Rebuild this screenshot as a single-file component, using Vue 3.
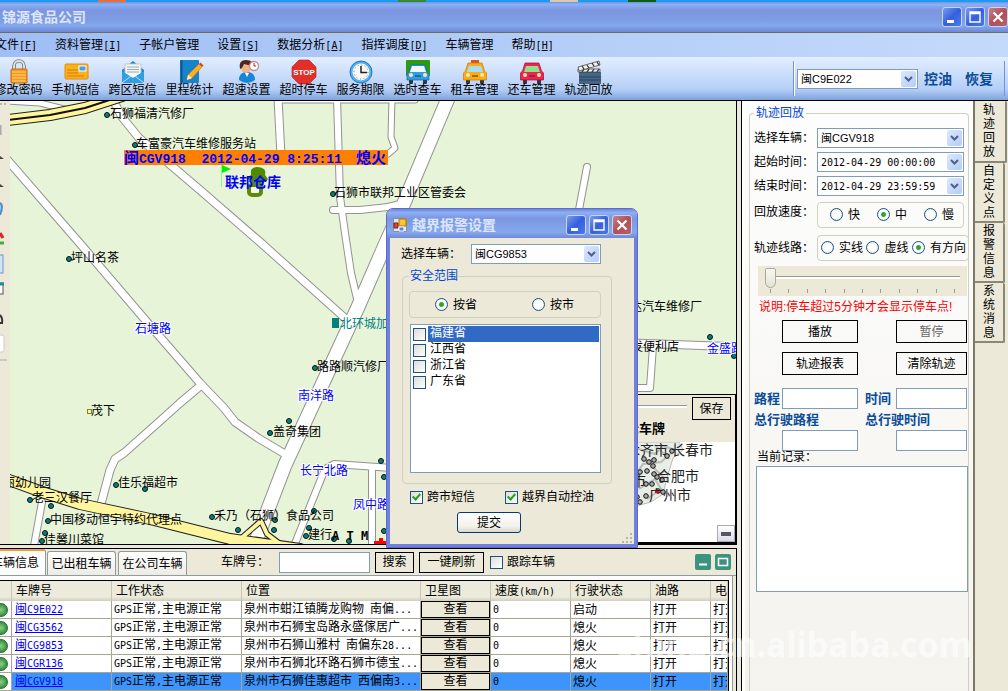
<script setup>
import { h, ref } from 'vue'

const Mix = (props) =>
  props.t
    .split(/([\x20-\x7e]+)/)
    .filter(Boolean)
    .map((p) => (/^[\x20-\x7e]/.test(p) ? h('span', { class: 'half' }, p) : p))
Mix.props = ['t']

const menus = [
  ['文件', 'F'], ['资料管理', 'I'], ['子帐户管理', ''], ['设置', 'S'],
  ['数据分析', 'A'], ['指挥调度', 'D'], ['车辆管理', ''], ['帮助', 'H'],
]
const tools = [
  ['lock', '修改密码'], ['card', '手机短信'], ['mail', '跨区短信'], ['book', '里程统计'],
  ['user', '超速设置'], ['stop', '超时停车'], ['clock', '服务期限'], ['truck', '选时查车'],
  ['taxi', '租车管理'], ['car', '还车管理'], ['film', '轨迹回放'],
]
const sideTabs = ['轨迹回放', '自定义点', '报警信息', '系统消息']
const headers = ['', '车牌号', '工作状态', '位置', '卫星图', '速度(km/h)', '行驶状态', '油路', '电']
const rows = [
  ['闽C9E022', '泉州市蚶江镇腾龙购物 南偏...', '启动'],
  ['闽CG3562', '泉州市石狮宝岛路永盛傢居广...', '熄火'],
  ['闽CG9853', '泉州市石狮山雅村 南偏东28...', '熄火'],
  ['闽CGR136', '泉州市石狮北环路石狮市德宝...', '熄火'],
  ['闽CGV918', '泉州市石狮佳惠超市 西偏南3...', '熄火'],
]
const provinces = ['福建省', '江西省', '浙江省', '广东省']

const roads = [
  [9, 'M112 98 L122 117 L139 138 L200 190 L260 242 L346 319'],
  [9, 'M4 156 L50 209 L83 247 L147 322 L200 383 L224 408 L235 422 L258 438 L290 457'],
  [9, 'M199 387 L180 403 L160 421 L124 453 L115 459 L110 470 L101 504'],
  [15, 'M449 96 L404 203 L385 245 L358 307 L285 465 L254 546'],
  [9, 'M278 98 L281 156'],
  [8, 'M337 98 L340 197 L345 233 L351 273 L358 303'],
  [8, 'M333 210 L360 210 L388 207 L404 203'],
  [7, 'M392 98 L391 137 L395 148 L388 154'],
  [7, 'M281 100 L415 100'],
  [7, 'M8 101 L40 103 L68 110'],
  [8, 'M587 167 L578 215'],
  [8, 'M294 546 L325 469 L334 464 L392 468'],
  [8, 'M372 468 L372 546'],
  [8, 'M42 502 L34 546'],
  [9, 'M630 343 L660 344 L740 347'],
  [8, 'M653 346 L650 388 L630 388'],
]
const yellow = [
  [12, 'M8 120 L50 115 L85 108 L122 96'],
  [12, 'M6 479 L45 493 L80 504 L150 519 L230 539 L300 549'],
  [6, 'M238 541 L261 521 L267 534 L280 544'],
]
const dots = [
  [107, 115], [135, 145], [333, 194], [69, 259], [315, 368], [289, 421], [270, 433], [116, 485],
  [145, 489], [30, 500], [51, 506], [48, 521], [45, 533], [42, 541], [212, 517], [238, 530],
  [274, 530], [275, 520], [314, 511], [309, 528], [306, 536], [334, 539], [349, 541],
  [381, 461], [384, 477], [384, 531], [710, 337], [734, 356],
]
const places = [
  ['石狮福清汽修厂', 110, 118], ['车富豪汽车维修服务站', 136, 148], ['石狮市联邦工业区管委会', 334, 197],
  ['坪山名茶', 71, 262], ['路路顺汽修厂', 317, 371], ['盖奇集团', 273, 436], ['茂下', 91, 415],
  ['丽幼儿园', 3, 487], ['老三汉餐厅', 32, 502], ['佳乐福超市', 118, 487],
  ['中国移动恒宇特约代理点', 50, 524], ['佳馨川菜馆', 44, 544], ['禾乃（石狮）食品公司', 214, 520],
  ['建行', 308, 539], ['运达汽车维修厂', 618, 311], ['百发便利店', 619, 351],
]
const streets = [
  ['石塘路', 135, 333], ['南洋路', 298, 400], ['长宁北路', 300, 475], ['凤中路', 353, 509], ['金盛路', 707, 353],
]
const blobs = [
  [645, 458], [650, 461], [655, 459], [654, 465], [641, 471], [648, 470], [658, 476], [647, 483],
  [653, 483], [663, 479], [659, 490], [647, 495], [641, 501], [668, 455], [673, 450], [664, 491], [638, 496], [655, 473],
]

const vehicle = ref('闽CG9853')
const scope = ref('prov')
const speed = ref('mid')
const line = ref('dir')
const sms = ref(true)
const autoOil = ref(true)
const plate = ref('')
</script>

<template>
  <div class="app">
    <div class="desktop"><i class="d1"></i><i class="d2"></i><i class="d3"></i><i class="d4"></i></div>

    <header class="titlebar">
      <h1>锦源食品公司</h1>
      <div class="winbtns">
        <button class="wb" aria-label="最小化"><svg viewBox="0 0 18 18"><path d="M4 12h7v3H4z" fill="#fff" /></svg></button>
        <button class="wb" aria-label="最大化"><svg viewBox="0 0 18 18"><path d="M4 4h10v10H4zM4 5.5h10" fill="none" stroke="#fff" stroke-width="1.4" /></svg></button>
        <button class="wb close" aria-label="关闭"><svg viewBox="0 0 18 18"><path d="M4.500 4.500l9 9M13.500 4.500l-9 9" stroke="#fff" stroke-width="2.200" /></svg></button>
      </div>
    </header>

    <nav class="menubar">
      <button v-for="m in menus" :key="m[0]">{{ m[0] }}<span v-if="m[1]" class="half">[<u>{{ m[1] }}</u>]</span></button>
    </nav>

    <div class="toolbar">
      <button v-for="t in tools" :key="t[1]" class="tool">
        <svg viewBox="0 0 24 24">
          <g v-if="t[0] === 'lock'">
            <path d="M7 10V6a5 5 0 0 1 10 0v5" fill="none" stroke="#777" stroke-width="3.600" />
            <path d="M7 10V6a5 5 0 0 1 10 0v5" fill="none" stroke="#e4e6e8" stroke-width="1.800" />
            <rect x="4" y="9" width="16" height="14" rx="1" fill="#f79a1c" stroke="#c86a08" />
            <path d="M5 12h14M5 15h14M5 18h14M5 21h14" stroke="#ffd27a" />
          </g>
          <g v-else-if="t[0] === 'card'">
            <rect x="1" y="4" width="23" height="15" rx="1" fill="#f9b21c" stroke="#e88a08" />
            <path d="M3 10h11M3 13h11M3 16h17" stroke="#d87608" />
            <rect x="15" y="6" width="7" height="5" fill="#3fa2ec" stroke="#fff" />
          </g>
          <g v-else-if="t[0] === 'mail'">
            <path d="M1 10L12 1l11 9v13H1z" fill="#1f83c8" />
            <path d="M4 4h16v14H4z" fill="#f7f7f2" stroke="#bcc8d4" />
            <path d="M6 7h12M6 9.500h12M6 12h12" stroke="#9aa7b4" />
            <path d="M1 11l11 7 11-7v12H1z" fill="#2f9fe4" /><path d="M1 23l9-7M23 23l-9-7" stroke="#b6e2fb" />
          </g>
          <g v-else-if="t[0] === 'book'">
            <rect x="2" y="0" width="19" height="23" rx="1" fill="#1683cc" /><path d="M3.500 0v23" stroke="#0a5690" stroke-width="2" />
            <path d="M9 20l1-5L21 4l3 3-10 11z" fill="#fbb21c" stroke="#e07808" stroke-width=".7" />
            <path d="M21 4l1.500-1.500 3 3L24 7z" fill="#e04028" /><path d="M9 20l1-5 4 3z" fill="#fff2d0" />
          </g>
          <g v-else-if="t[0] === 'user'">
            <path d="M4 20q0-8 8-8t8 8q-8 6-16 0" fill="#1686d6" /><path d="M10 13l2 4 2-4z" fill="#fff" />
            <circle cx="11" cy="8" r="5" fill="#f2b588" /><path d="M5 9Q3 0 11 0t6 6L9 4 7 8z" fill="#4a2a20" />
            <circle cx="19" cy="6" r="4.500" fill="#fff" stroke="#c88" stroke-width="1.300" /><path d="M19 3v3h2" fill="none" stroke="#933" />
          </g>
          <g v-else-if="t[0] === 'stop'">
            <path d="M7 0h10l7 7v10l-7 7H7l-7-7V7z" fill="#e22f2a" stroke="#b81c1c" stroke-width=".6" />
            <text x="12" y="15" text-anchor="middle" class="stoptext">STOP</text>
          </g>
          <g v-else-if="t[0] === 'clock'">
            <circle cx="12" cy="12" r="11" fill="#52aef0" stroke="#2278bc" /><circle cx="12" cy="12" r="8.500" fill="#f8f8f8" />
            <circle cx="12" cy="12" r="7" fill="none" stroke="#777" stroke-dasharray="1 2.660" /><path d="M12 6v6.500h6" fill="none" stroke="#222" stroke-width="1.500" />
          </g>
          <g v-else-if="t[0] === 'film'">
            <rect x="2" y="12" width="22" height="12" fill="#426684" /><path d="M2 17h22M2 20h22" stroke="#27455f" />
            <path d="M1 12h22v-3H1z" fill="#eee" stroke="#333" stroke-width=".7" /><path d="M1 7l21-6 1 4L2 11z" fill="#eee" stroke="#333" stroke-width=".7" />
            <path d="M5 6l2 3M10 5l2 3M15 3l2 3M20 2l2 3M5 12l2-3M10 12l2-3M15 12l2-3M20 12l2-3" stroke="#333" stroke-width="1.300" />
          </g>
          <g v-else>
            <rect v-if="t[0] === 'truck'" x="0" y="0" width="24" height="16" rx="1" fill="#2f9a10" />
            <rect v-if="t[0] === 'taxi'" x="8" y="0" width="8" height="3" fill="#d8571c" />
            <rect x="3" y="18" width="4" height="6" rx="1" fill="#334" /><rect x="17" y="18" width="4" height="6" rx="1" fill="#334" />
            <path
              :d="t[0] === 'truck' ? 'M5 5h14l2 7 2 2v6H1v-6l2-2z' : 'M5 3h14l2.5 8 2 2v7H.5v-7l2-2z'"
              :fill="t[0] === 'truck' ? '#2e9ee6' : t[0] === 'taxi' ? '#fbab14' : '#ee2450'"
              :stroke="t[0] === 'truck' ? '#1668a8' : t[0] === 'taxi' ? '#c87808' : '#a80c30'" stroke-width=".7"
            />
            <path d="M6 6h12l2 6H4z" :fill="t[0] === 'truck' ? '#f0f8ff' : t[0] === 'taxi' ? '#a8dcf4' : '#8ee08a'" />
            <circle cx="5" cy="15" r="2" fill="#ffe9a0" /><circle cx="19" cy="15" r="2" fill="#ffe9a0" /><path d="M9 16h6" stroke="#333" />
          </g>
        </svg>
        <span>{{ t[1] }}</span>
      </button>
      <div class="toolend">
        <span class="combo topcombo">
          <select aria-label="车辆"><option>闽C9E022</option></select>
          <svg viewBox="0 0 15 16"><path d="M4 6l3.500 3.500L11 6" /></svg>
        </span>
        <button class="oil">控油</button>
        <button class="oil">恢复</button>
      </div>
    </div>

    <main class="body">
      <section class="left">
        <div class="maprow">
          <div class="strip">
            <svg viewBox="0 0 10 443" preserveAspectRatio="xMinYMin slice">
              <path d="M0 3h6" stroke="#888" stroke-dasharray="2 2" /><path d="M0 24v10" stroke="#aaa" stroke-width="3" />
              <path d="M0 55l4 3H0zM0 83l4 3H0z" fill="#444" /><path d="M0 102q4 2 0 12" fill="#9bd0f4" stroke="#4a90c8" stroke-width="2" />
              <path d="M0 132l3 5" stroke="#d22" stroke-width="3" /><path d="M0 142h4" stroke="#4a4" stroke-width="3" />
              <rect x="-4" y="154" width="7" height="18" fill="#cfe4f8" stroke="#6a9ac8" /><rect x="-4" y="182" width="7" height="11" fill="#fff" stroke="#555" /><path d="M-4 183h8" stroke="#28a" stroke-width="3" />
              <path d="M0 214q3 3 2 8H0" fill="none" stroke="#333" stroke-width="2" /><rect x="-4" y="234" width="8" height="17" rx="2" fill="#fff" stroke="#ccc" /><path d="M0 259h7" stroke="#aaa" />
            </svg>
          </div>
          <div class="map">
            <svg class="canvas" viewBox="10 101 726 443" preserveAspectRatio="xMinYMin slice">
              <g fill="none" stroke-linecap="round" stroke-linejoin="round">
                <path v-for="(r, i) in roads" :key="'a' + i" :d="r[1]" :stroke-width="r[0]" stroke="#939393" />
                <path v-for="(r, i) in roads" :key="'b' + i" :d="r[1]" :stroke-width="r[0] - 2" stroke="#fff" />
                <path v-for="(r, i) in yellow" :key="'c' + i" :d="r[1]" :stroke-width="r[0]" stroke="#222" />
                <path v-for="(r, i) in yellow" :key="'d' + i" :d="r[1]" :stroke-width="r[0] - 2" stroke="#fff59c" />
                <path :d="yellow[0][1]" stroke="#111" stroke-width="2" />
              </g>
              <circle v-for="(d, i) in dots" :key="'e' + i" :cx="d[0]" :cy="d[1]" r="2.500" fill="#008080" stroke="#111" />
              <rect x="87.500" y="409.500" width="4" height="4" fill="none" stroke="#880" />
              <text v-for="p in places" :key="p[0]" :x="p[1]" :y="p[2]" class="place">{{ p[0] }}</text>
              <text x="332" y="540" class="atm">A T M</text>
              <rect x="332" y="318" width="7" height="10" fill="#008080" /><text x="340" y="328" class="place teal">北环城加油站</text>
              <text v-for="p in streets" :key="p[0]" :x="p[1]" :y="p[2]" class="street">{{ p[0] }}</text>
              <path d="M374 541h5v-3h4v3h6v3h-15z" fill="#f00" />
              <rect x="124" y="150" width="264" height="15" fill="#ff8000" />
              <text x="124" y="163" class="tag">闽<tspan class="tagl">CGV918&#160;&#160;2012-04-29 8:25:11 </tspan><tspan x="356">熄火</tspan></text>
              <path d="M221.500 165v22" stroke="#7fff7f" /><path d="M222 165l9 4-9 4z" fill="#0e0" />
              <path d="M251 170q2-3 6-3t7 2q2 2 1 6l3 4-2 3h-3v5h-12v-6l-5-3 5-3z" fill="#4f8a00" />
              <rect x="249" y="185" width="12" height="10" rx="3" fill="#f4faec" stroke="#5b8c08" stroke-width="4" />
              <text x="225" y="187" class="depot">联邦仓库</text>
            </svg>
            <aside class="overview">
              <div class="ovtop">
                <i class="ovslider"></i>
                <button class="flat">保存</button>
                <b>显示车牌</b>
              </div>
              <div class="ovmap">
                <svg viewBox="600 441 136 101" preserveAspectRatio="xMinYMin slice">
                  <path d="M620 441h60l4 8-10 8-6 20-4 16-12 8-22 6-20-10z" fill="#e6eee6" stroke="#c4b8b8" />
                  <path d="M636 447l20 6 8-8 12 4-14 12-18 2-8 12 14 8 16-14M640 488l16-10 6 10-14 10M656 444l14 14M644 456l22 22" fill="none" stroke="#bbb" stroke-width="2" />
                  <circle v-for="(b, i) in blobs" :key="i" :cx="b[0]" :cy="b[1]" r="2.300" fill="#aaa" stroke="#111" />
                  <path d="M656 491h4" stroke="#e00" stroke-width="2" />
                  <text x="627" y="454">木齐市</text><text x="672" y="454">长春市</text><text x="658" y="480">合肥市</text>
                  <text x="633" y="485">市</text><text x="650" y="499">广州市</text>
                </svg>
                <button class="shrink" aria-label="收起"></button>
              </div>
            </aside>
          </div>
        </div>

        <section class="bottom">
          <div class="tabs">
            <button class="tab on">车辆信息</button>
            <button class="tab">已出租车辆</button>
            <button class="tab">在公司车辆</button>
            <label class="platelab" for="plate">车牌号：</label>
            <input id="plate" v-model="plate" class="plate" type="text" />
            <button class="flat s1">搜索</button>
            <button class="flat s2">一键刷新</button>
            <label class="follow"><input type="checkbox" />跟踪车辆</label>
            <div class="greens">
              <button aria-label="最小化"><svg viewBox="0 0 16 16"><path d="M4 10.500h8" stroke="#fff" stroke-width="2" /></svg></button>
              <button aria-label="最大化"><svg viewBox="0 0 16 16"><path d="M3.500 4.500h9v7h-9z" fill="none" stroke="#fff" stroke-width="1.500" /></svg></button>
            </div>
          </div>
          <div class="tablebox">
            <table>
              <colgroup><col class="c0" /><col class="c1" /><col class="c2" /><col /><col class="c4" /><col class="c5" /><col class="c5" /><col class="c7" /><col class="c8" /></colgroup>
              <thead><tr><th v-for="(x, i) in headers" :key="i"><Mix :t="x" /></th></tr></thead>
              <tbody>
                <tr v-for="(r, i) in rows" :key="r[0]" :class="{ sel: i === 4 }">
                  <td class="ball"><i></i></td>
                  <td class="link"><a href="#"><Mix :t="r[0]" /></a></td>
                  <td><Mix t="GPS正常,主电源正常" /></td>
                  <td><Mix :t="r[1]" /></td>
                  <td class="view"><button>查看</button></td>
                  <td><Mix t="0" /></td>
                  <td>{{ r[2] }}</td>
                  <td>打开</td>
                  <td>打开</td>
                </tr>
              </tbody>
            </table>
          </div>
        </section>
      </section>

      <section class="right">
        <form class="panel" @submit.prevent>
          <fieldset>
            <legend>轨迹回放</legend>
            <div class="frow first">
              <label for="rv">选择车辆：</label>
              <span class="combo"><select id="rv"><option>闽CGV918</option></select><svg viewBox="0 0 15 16"><path d="M4 6l3.500 3.500L11 6" /></svg></span>
            </div>
            <div class="frow">
              <label for="t1">起始时间：</label>
              <span class="combo date"><input id="t1" type="text" value="2012-04-29 00:00:00" /><svg viewBox="0 0 15 16"><path d="M4 6l3.500 3.500L11 6" /></svg></span>
            </div>
            <div class="frow">
              <label for="t2">结束时间：</label>
              <span class="combo date"><input id="t2" type="text" value="2012-04-29 23:59:59" /><svg viewBox="0 0 15 16"><path d="M4 6l3.500 3.500L11 6" /></svg></span>
            </div>
            <div class="frow tall">
              <span class="up">回放速度：</span>
              <div class="group spd" role="radiogroup" aria-label="回放速度">
                <label><input v-model="speed" type="radio" value="fast" />快</label>
                <label><input v-model="speed" type="radio" value="mid" />中</label>
                <label><input v-model="speed" type="radio" value="slow" />慢</label>
              </div>
            </div>
            <div class="frow tall wide">
              <span>轨迹线路：</span>
              <div class="group lin" role="radiogroup" aria-label="轨迹线路">
                <label><input v-model="line" type="radio" value="solid" />实线</label>
                <label><input v-model="line" type="radio" value="dash" />虚线</label>
                <label><input v-model="line" type="radio" value="dir" />有方向</label>
              </div>
            </div>
            <div class="slider">
              <input type="range" min="0" max="10" value="0" aria-label="回放进度" />
              <div class="ticks"><i v-for="n in 11" :key="n"></i></div>
            </div>
            <p class="note">说明:停车超过5分钟才会显示停车点!</p>
            <div class="grid btns">
              <button class="flat">播放</button><button class="flat off" disabled>暂停</button>
              <button class="flat">轨迹报表</button><button class="flat">清除轨迹</button>
            </div>
            <div class="grid stats">
              <label for="g1">路程</label><input id="g1" type="text" /><label for="g2" class="sec">时间</label><input id="g2" type="text" />
              <label for="g3" class="span2">总行驶路程</label><label for="g4" class="span2">总行驶时间</label>
              <input id="g3" type="text" class="c-a" /><input id="g4" type="text" class="c-b" />
            </div>
            <label class="reclab" for="rec">当前记录：</label>
            <textarea id="rec"></textarea>
          </fieldset>
        </form>
        <nav class="side">
          <button v-for="(s, i) in sideTabs" :key="s" :class="{ cur: i === 0 }">{{ s }}</button>
        </nav>
      </section>
    </main>

    <div class="mark">china.cn.alibaba.com</div>

    <section class="dialog" role="dialog" aria-label="越界报警设置">
      <header>
        <svg class="formicon" viewBox="0 0 14 14">
          <path d="M.5.500h13v13H.5z" fill="#dfe6f4" stroke="#8a90a0" /><path d="M6 1h7v7H6z" fill="#fbc62c" stroke="#a67a08" />
          <path d="M1 5h4v5H1z" fill="#e04432" stroke="#8c1c10" /><path d="M6 9h5v4H6z" fill="#4c84e8" stroke="#fff" />
        </svg>
        <h2>越界报警设置</h2>
        <div class="winbtns">
          <button class="wb" aria-label="最小化"><svg viewBox="0 0 18 18"><path d="M4 12h7v3H4z" fill="#fff" /></svg></button>
          <button class="wb" aria-label="最大化"><svg viewBox="0 0 18 18"><path d="M4 4h10v10H4zM4 5.500h10" fill="none" stroke="#fff" stroke-width="1.400" /></svg></button>
          <button class="wb close" aria-label="关闭"><svg viewBox="0 0 18 18"><path d="M4.500 4.500l9 9M13.500 4.500l-9 9" stroke="#fff" stroke-width="2.200" /></svg></button>
        </div>
      </header>
      <div class="dbody">
        <div class="drow">
          <label for="dv">选择车辆：</label>
          <span class="combo"><select id="dv" v-model="vehicle"><option>闽CG9853</option></select><svg viewBox="0 0 15 16"><path d="M4 6l3.500 3.500L11 6" /></svg></span>
        </div>
        <fieldset>
          <legend>安全范围</legend>
          <div class="group" role="radiogroup" aria-label="范围类型">
            <label><input v-model="scope" type="radio" value="prov" />按省</label>
            <label><input v-model="scope" type="radio" value="city" />按市</label>
          </div>
          <ul>
            <li v-for="(p, i) in provinces" :key="p"><label><input type="checkbox" /><span :class="{ hot: i === 0 }">{{ p }}</span></label></li>
          </ul>
        </fieldset>
        <div class="checks">
          <label><input v-model="sms" type="checkbox" />跨市短信</label>
          <label><input v-model="autoOil" type="checkbox" />越界自动控油</label>
        </div>
        <button class="submit">提交</button>
      </div>
      <svg class="grip" viewBox="0 0 12 12"><path d="M8 1h2v2H8zM4 5h2v2H4zM8 5h2v2H8zM0 9h2v2H0zM4 9h2v2H4zM8 9h2v2H8z" fill="#b8b4a2" /></svg>
    </section>
  </div>
</template>

<style>
body { margin: 0; overflow: hidden; }
.half { font-family: "DejaVu Sans Mono", monospace; font-size: 10px; white-space: pre; }
</style>

<style scoped>
.app {
  position: relative; height: 100vh; display: flex; flex-direction: column; overflow: hidden;
  background: #ece9d8; color: #000; font: 12px/16px "Liberation Sans", "Noto Sans CJK SC", sans-serif; white-space: nowrap;
}
.app * { box-sizing: border-box; }
button, input, select, textarea { font: inherit; color: inherit; margin: 0; padding: 0; border-radius: 0; }
button { border: 0; background: none; line-height: 16px; }
h1, h2, p, ul { margin: 0; padding: 0; }
fieldset { margin: 0; min-width: 0; }

.desktop { height: 2px; background: #1b9cf0; display: flex; }
.desktop i { height: 2px; width: 28px; }
.d1 { margin-left: 98px; background: #e87038; }
.d2 { margin-left: 272px; background: #3a8a30; }
.d3 { margin-left: 124px; background: #d8c8b0; }
.d4 { margin-left: 50px; background: #0a6010; }

.titlebar {
  height: 31px; display: flex; align-items: center; justify-content: space-between; padding: 0 0 0 2px;
  background: linear-gradient(#7092e4, #8cb0f4 8%, #7c96e0 26%, #7d9ce4 60%, #84a8ee 78%, #7088d4);
  border-bottom: 1px solid #706c58;
}
h1, h2 { font-size: 14px; line-height: 18px; font-weight: 700; color: #dce6fa; }
.winbtns { display: flex; gap: 3px; }
.wb {
  width: 20px; height: 20px; border: 1px solid #c8d4f4; border-radius: 3px;
  background: linear-gradient(135deg, #7c9cf0, #3460dc 50%, #4a7aec);
}
.wb svg { display: block; width: 18px; height: 18px; }
.wb.close { background: linear-gradient(135deg, #c88088, #b05058 50%, #b86068); }

.menubar { height: 24px; display: flex; align-items: center; background: linear-gradient(90deg, #9ebef5, #c4dafa); }
.menubar button { padding: 0 9px; flex: none; }
.menubar button:first-child { margin-left: -14px; }

.toolbar {
  height: 44px; display: flex; align-items: stretch; border-bottom: 1px solid #000;
  background: linear-gradient(#e2eefe, #c8dcfa 45%, #b4cef6 75%, #7ea4dc);
}
.tool { width: 57px; flex: none; display: flex; flex-direction: column; align-items: center; padding-top: 3px; }
.tool:first-child { margin-left: -10px; }
.tool svg { width: 24px; height: 24px; flex: none; overflow: visible; }
.tool span { line-height: 14px; margin-top: -1px; }
.stoptext { font: 700 8px "Liberation Sans", sans-serif; fill: #fff; }
.toolend {
  margin: 4px 3px 4px auto; padding: 0 11px 0 3px; display: flex; align-items: center; gap: 6px;
  border-left: 1px solid #6f94d0; border-right: 1px solid #6f94d0; box-shadow: inset 1px 0 #fff;
}
.oil { font-size: 14px; font-weight: 700; color: #0a4c98; }
.oil + .oil { margin-left: 7px; }

.combo { position: relative; display: block; height: 20px; flex: 1; }
.combo select, .combo input {
  appearance: none; display: block; width: 100%; height: 100%; border: 1px solid #7f9db9; background: #fff; padding: 0 20px 0 3px;
  font-family: "Liberation Sans", "Noto Sans CJK SC", sans-serif; font-size: 11px; line-height: 16px; outline: none;
}
.combo.date input { font: 10px/16px "DejaVu Sans Mono", monospace; }
.combo svg {
  position: absolute; right: 2px; top: 2px; width: 15px; height: calc(100% - 4px); pointer-events: none;
  background: linear-gradient(135deg, #dce8fe, #b4ccf8); border-radius: 2px;
}
.combo path { fill: none; stroke: #4d6185; stroke-width: 2; }
.topcombo { width: 121px; flex: none; }

.body { flex: 1; min-height: 0; display: flex; }
.left { flex: 1; min-width: 0; display: flex; flex-direction: column; }
.maprow { flex: 1; min-height: 0; display: flex; border-right: 1px solid #000; border-bottom: 1px solid #000; }
.strip { width: 10px; background: #ece9d8; flex: none; overflow: hidden; }
.strip svg { display: block; width: 100%; height: 100%; }
.map { position: relative; flex: 1; min-width: 0; background: #e7f4d8; overflow: hidden; }
.canvas { display: block; width: 100%; height: 100%; }
.place { font-size: 12px; fill: #000; }
.teal { fill: #008080; }
.atm { font: 700 12px "DejaVu Sans Mono", monospace; }
.street { font-size: 12px; fill: #00f; stroke: #fff; stroke-width: 2px; paint-order: stroke; }
.tag { font-size: 15px; font-weight: 700; fill: #00f; }
.tagl { font-family: "Liberation Mono", monospace; font-size: 13px; white-space: pre; }
.depot { font-size: 14px; font-weight: 700; fill: #00f; }

.overview { position: absolute; right: 0; bottom: 0; width: 137px; height: 150px; border: 1px solid #000; border-width: 1px 1px 2px 0; background: #ece9d8; display: flex; flex-direction: column; }
.ovtop { height: 47px; display: grid; grid-template-columns: 1fr 39px; column-gap: 5px; padding: 2px 4px 0 0; flex: none; }
.ovslider { height: 3px; margin-top: 8px; border-top: 1px solid #999; background: #fff; }
.ovtop b { margin-left: 14px; margin-top: -4px; font-size: 13px; }
.ovmap { position: relative; flex: 1; background: #fff; min-height: 0; }
.ovmap svg { display: block; width: 100%; height: 100%; }
.ovmap text { font-size: 14px; fill: #222; }
.shrink { position: absolute; right: 0; bottom: 0; width: 18px; height: 17px; border: 1px solid #a8a8c0; background: linear-gradient(#fff, #dcdce8); }
.shrink::after { content: ""; display: block; width: 10px; height: 4px; margin: auto; background: #556; }

.flat { border: 1px solid #000; background: transparent; height: 23px; }
.flat.off { color: #666; }

.bottom { flex: none; margin-top: 3px; border-top: 1px solid #000; border-right: 1px solid #000; }
.tabs { height: 27px; display: flex; align-items: center; padding-right: 5px; border-bottom: 1px solid #919b9c; }
.tab { flex: none; height: 24px; margin-right: 2px; align-self: flex-end; border: 1px solid #919b9c; border-bottom: 0; border-radius: 3px 3px 0 0; background: linear-gradient(#fff, #ecebe4); width: 69px; }
.tab.on { height: 26px; width: 62px; margin-left: -16px; margin-right: 1px; background: #fcfcfb; border-top: 2px solid #f0a030; }
.platelab { margin-left: 32px; width: 58px; }
.plate { width: 91px; height: 21px; border: 1px solid #7f9db9; background: #fff; outline: none; padding: 0 3px; }
.s1 { width: 39px; height: 21px; margin-left: 5px; }
.s2 { width: 65px; height: 21px; margin-left: 5px; }
.follow { display: flex; align-items: center; gap: 4px; margin-left: 6px; }
.greens { display: flex; gap: 4px; margin-left: auto; }
.greens button { width: 16px; height: 16px; background: #3c9480; border-radius: 2px; }
.greens svg { display: block; width: 16px; height: 16px; }
.tablebox { margin: 0 3px 0 0; padding-top: 4px; background: #fcfcfc; border-right: 1px solid #919b9c; padding-right: 3px; overflow: hidden; }
table { table-layout: fixed; width: 100%; border-collapse: separate; border-spacing: 0; background: #fff; border-top: 1px solid #000; border-right: 1px solid #000; }
.c0 { width: 12px; } .c1 { width: 100px; } .c2 { width: 130px; } .c4 { width: 70px; } .c5 { width: 80px; } .c7 { width: 60px; } .c8 { width: 17px; }
th { height: 20px; padding: 0 0 0 4px; text-align: left; font-weight: 400; background: linear-gradient(#ebeadb 80%, #d0cdbc); border-right: 1px solid #c8c4b0; overflow: hidden; }
td { height: 18px; padding: 0 0 0 2px; border-right: 1px solid #a8a590; border-bottom: 1px solid #a8a590; overflow: hidden; line-height: 16px; }
td.link { padding-left: 3px; }
td a { color: #00f; }
td.ball { padding: 0; }
.ball i { display: block; width: 14px; height: 14px; margin-left: -6px; border-radius: 50%; background: radial-gradient(#8ccf84, #3f9a48 60%, #2c6838); border: 1px solid #2c6838; }
td.view { padding: 0; }
.view button { display: block; width: 100%; height: 17px; line-height: 15px; border: 1px solid #000; background: #ece9d8; color: #000; }
tr.sel td { background: #3c94fc; }
tr.sel td.ball { background: #fff; }

.right { width: 271px; flex: none; display: flex; padding-left: 4px; }
.panel { width: 234px; flex: none; border-left: 1px solid #000; border-right: 2px solid #7c7868; padding: 4px 4px 0 7px; background: linear-gradient(#fdfdfd, #f4f3ee); box-shadow: inset 3px 0 #fff; }
fieldset { border: 1px solid #d0d0bf; border-radius: 4px; }
.panel fieldset { height: 100%; border-bottom: 0; border-radius: 4px 4px 0 0; padding: 0 1px 0 4px; }
legend { color: #0046d5; padding: 0 2px; line-height: 16px; }
.panel legend { margin-left: 0; }
.frow { display: grid; grid-template-columns: 63px 1fr; align-items: center; height: 24px; margin-right: 3px; }
.frow.first { margin-top: 5px; }
.frow.tall { height: 33px; }
.frow.wide { margin-right: -2px; }
.up { margin-top: -6px; }
.group { border: 1px solid #d0d0bf; border-radius: 4px; height: 26px; display: flex; align-items: center; }
.group label { display: flex; align-items: center; }
.spd { justify-content: space-between; padding: 0 9px 0 12px; }
.spd label { gap: 5px; }
.lin { justify-content: space-between; padding: 0 2px 0 3px; }
.lin label { gap: 5px; }
input[type="radio"] { appearance: none; flex: none; width: 13px; height: 13px; border: 1px solid #1d5281; border-radius: 50%; background: radial-gradient(#fff 40%, #dcdcd4); }
input[type="radio"]:checked { background: radial-gradient(circle, #2fa62f 0 2px, #fff 3px, #eee); }
input[type="checkbox"] { appearance: none; flex: none; width: 13px; height: 13px; border: 1px solid #1d5281; background: linear-gradient(135deg, #dcdcd7, #fff); position: relative; }
input[type="checkbox"]:checked::after { content: ""; position: absolute; left: 3px; top: 0; width: 3px; height: 6px; border: solid #21a121; border-width: 0 2px 2px 0; transform: rotate(42deg); }
.slider { height: 30px; margin: 2px 0 0 4px; padding: 2px 7px 0; background: #ece9d8; }
.slider input { appearance: none; display: block; width: 100%; height: 20px; background: linear-gradient(#9c9a8c, #9c9a8c) 0 8px / 100% 1px no-repeat, linear-gradient(#fff, #fff) 0 9px / 100% 2px no-repeat; }
.slider input::-webkit-slider-thumb { appearance: none; width: 11px; height: 20px; background: linear-gradient(#f8f8f4, #e4e2d4); border: 1px solid #aaa898; border-radius: 2px 2px 6px 6px; }
.ticks { display: flex; justify-content: space-between; padding: 1px 5px 0; }
.ticks i { width: 1px; height: 4px; background: #a09c8c; }
.note { color: #f00; margin: 3px 0 5px 5px; line-height: 16px; }
.grid { display: grid; grid-template-columns: 28px 76px 38px 1fr; }
.btns { row-gap: 9px; }
.btns .flat:nth-child(odd) { grid-column: 2; }
.btns .flat:nth-child(even) { grid-column: 4; }
.stats { margin-top: 13px; align-items: center; color: #0a4c98; font-weight: 700; }
.stats input { height: 21px; width: 100%; border: 1px solid #7f9db9; background: #fff; padding: 0 3px; outline: none; }
.stats label { font-size: 13px; height: 21px; line-height: 21px; }
.stats .sec { padding-left: 7px; }
.span2 { grid-column: span 2; }
.span2 + .span2 { padding-left: 7px; }
.c-a { grid-column: 2; }
.c-b { grid-column: 4; }
.reclab { display: block; margin: -2px 0 0 3px; line-height: 16px; }
.panel textarea { display: block; width: calc(100% - 1px); height: 126px; margin: 1px 0 0 2px; border: 1px solid #7f9db9; background: #fff; resize: none; outline: none; }

.side { flex: 1; display: flex; flex-direction: column; align-items: flex-start; }
.side button {
  width: 30px; height: 60px; padding: 0 8px; white-space: normal; word-break: break-all; line-height: 14px;
  border-right: 2px solid #8c8878; border-bottom: 2px solid #8c8878; border-radius: 0 2px 2px 0;
}
.side .cur { width: 32px; height: 62px; padding: 0 10px 0 8px; }

.mark { position: absolute; right: 36px; bottom: 24px; font: 700 34px/46px "Noto Sans", sans-serif; color: rgba(255, 255, 255, .6); pointer-events: none; }

.dialog {
  position: absolute; left: 386px; top: 208px; width: 252px; border: 1px solid #5c6cc8; border-radius: 7px 7px 0 0;
  background: #ece9d8; box-shadow: inset 3px 0 #7080dc, inset -3px 0 #7080dc, inset 0 -3px #7080dc;
}
.dialog header { height: 29px; display: flex; align-items: center; padding: 2px 5px 0 6px; border-radius: 6px 6px 0 0; background: linear-gradient(#6c84dc, #8cb0f4 12%, #7c96e0 32%, #84a8ee 80%, #7088d4); }
.formicon { width: 14px; height: 14px; margin-right: 5px; }
.dialog .winbtns { margin-left: auto; }
.dbody { padding: 6px 25px 14px 14px; display: flex; flex-direction: column; }
.drow { display: flex; align-items: center; margin-right: 11px; }
.drow label { width: 70px; }
.dbody fieldset { padding: 0 10px 10px 6px; margin-left: 1px; margin-top: 4px; }
.dbody legend { padding: 0 1px; }
.dbody .group { height: 27px; margin: 7px 0 6px; padding-left: 25px; gap: 56px; }
.dbody .group label { gap: 5px; width: 41px; }
ul { list-style: none; height: 149px; margin-left: 1px; padding: 1px; border: 1px solid #7f9db9; background: #fff; }
li label { display: flex; align-items: center; height: 16px; gap: 2px; }
li input { margin-left: 1px; }
li span { flex: 1; padding-left: 2px; line-height: 14px; padding-bottom: 2px; }
li .hot { background: #316ac5; color: #fff; }
.checks { display: flex; gap: 30px; margin: 5px 0 7px 9px; }
.checks label { display: flex; align-items: center; gap: 4px; }
.submit { width: 64px; height: 21px; margin-left: 56px; border: 1px solid #003c74; border-radius: 3px; background: linear-gradient(#fff, #f2f1ea 70%, #dcd8cc); }
.grip { position: absolute; right: 3px; bottom: 3px; width: 12px; height: 12px; }
</style>
